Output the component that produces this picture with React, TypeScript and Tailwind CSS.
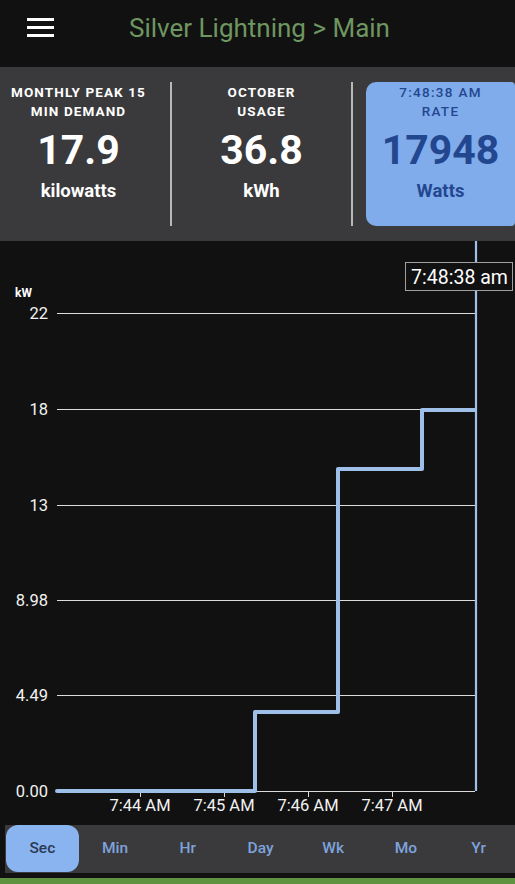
import React from 'react';

const gridLines = [
  { label: '22', y: 72 },
  { label: '18', y: 168 },
  { label: '13', y: 264 },
  { label: '8.98', y: 359 },
  { label: '4.49', y: 454 },
  { label: '0.00', y: 550 },
];

const xTicks = [
  { label: '7:44 AM', x: 140 },
  { label: '7:45 AM', x: 224 },
  { label: '7:46 AM', x: 308 },
  { label: '7:47 AM', x: 392 },
];

const tabs = ['Sec', 'Min', 'Hr', 'Day', 'Wk', 'Mo', 'Yr'];

const StatLabel = ({ lines }: { lines: string[] }) => (
  <div className="text-[13.5px] font-bold tracking-[1.1px] leading-[19px] text-white text-center">
    {lines.map((l) => (
      <div key={l}>{l}</div>
    ))}
  </div>
);

const Chart = () => {
  // step line in chart-local coordinates (top of chart = page y 241)
  const step = '57,550 255,550 255,471 338,471 338,228 422,228 422,169 475,169';
  return (
    <svg width="515" height="584" viewBox="0 0 515 584" className="block">
      <text x="15" y="56" fill="#ffffff" fontSize="12" fontWeight="700" fontFamily="Roboto, sans-serif">
        kW
      </text>
      {gridLines.map((g) => (
        <g key={g.label}>
          <line x1="57" x2="475" y1={g.y + 0.5} y2={g.y + 0.5} stroke="#dcdcdc" strokeWidth="1" />
          <text
            x="48"
            y={g.y + 6}
            textAnchor="end"
            fill="#f2f2f2"
            fontSize="16.5"
            fontFamily="Roboto, sans-serif"
          >
            {g.label}
          </text>
        </g>
      ))}
      {xTicks.map((t) => (
        <g key={t.label}>
          <line x1={t.x + 0.5} x2={t.x + 0.5} y1="550" y2="556" stroke="#dcdcdc" strokeWidth="1" />
          <text
            x={t.x}
            y="570"
            textAnchor="middle"
            fill="#f2f2f2"
            fontSize="16.5"
            fontFamily="Roboto, sans-serif"
          >
            {t.label}
          </text>
        </g>
      ))}
      <polyline
        points={step}
        fill="none"
        stroke="#9dbfe8"
        strokeWidth="4"
        strokeLinejoin="round"
        strokeLinecap="round"
      />
      <line x1="476" x2="476" y1="0" y2="550" stroke="#9dbfe8" strokeWidth="2.2" />
      <rect x="405.5" y="21.5" width="107" height="28" fill="#111111" stroke="#a0a0a0" strokeWidth="1" />
      <text x="459.5" y="42.5" textAnchor="middle" fill="#ffffff" fontSize="19.5" fontFamily="Roboto, sans-serif">
        7:48:38 am
      </text>
    </svg>
  );
};

export default function App() {
  return (
    <div className="w-[515px] h-[884px] bg-[#111111] flex flex-col overflow-hidden" style={{ fontFamily: 'Roboto, "Noto Sans", sans-serif' }}>
      {/* Header */}
      <div className="h-[67px] flex items-center relative shrink-0">
        <div className="absolute left-[27px] top-[18px] flex flex-col gap-[5px]">
          <div className="w-[27px] h-[3px] bg-white" />
          <div className="w-[27px] h-[3px] bg-white" />
          <div className="w-[27px] h-[3px] bg-white" />
        </div>
        <div className="w-full text-center pl-[4px] -mt-[10px] text-[26px] text-[#6e9660]">Silver Lightning &gt; Main</div>
      </div>

      {/* Stats */}
      <div className="h-[174px] bg-[#3a3a3c] flex items-stretch py-[15px] shrink-0">
        <div className="w-[170px] pr-[13px] flex flex-col items-center pt-[1px]">
          <StatLabel lines={['MONTHLY PEAK 15', 'MIN DEMAND']} />
          <div className="text-[41px] font-bold text-white leading-[46px] mt-[6px]">17.9</div>
          <div className="text-[18.5px] font-bold text-white mt-[5px]">kilowatts</div>
        </div>
        <div className="w-[2px] bg-[#b8b8b8]" />
        <div className="w-[179px] flex flex-col items-center pt-[1px]">
          <StatLabel lines={['OCTOBER', 'USAGE']} />
          <div className="text-[41px] font-bold text-white leading-[46px] mt-[6px]">36.8</div>
          <div className="text-[18.5px] font-bold text-white mt-[5px]">kWh</div>
        </div>
        <div className="w-[2px] bg-[#b8b8b8]" />
        <div className="flex-1 ml-[13px] bg-[#80acec] rounded-[10px] rounded-r-[4px] flex flex-col items-center pt-[1px]">
          <div className="text-[13.5px] font-medium tracking-[1.3px] leading-[19px] text-[#23478f] text-center">
            <div>7:48:38 AM</div>
            <div>RATE</div>
          </div>
          <div className="text-[41px] font-bold text-[#23478f] leading-[46px] mt-[6px]">17948</div>
          <div className="text-[18.5px] font-bold text-[#23478f] mt-[5px]">Watts</div>
        </div>
      </div>

      {/* Chart */}
      <div className="h-[584px] shrink-0">
        <Chart />
      </div>

      {/* Tabs */}
      <div className="h-[48px] ml-[5px] bg-[#3a3a3c] flex shrink-0">
        {tabs.map((t, i) => (
          <div
            key={t}
            className={
              i === 0
                ? 'flex-1 ml-[1px] mb-[1px] rounded-[12px] bg-[#8ab4f0] text-[#2a3a55] flex items-center justify-center text-[15.5px] font-medium'
                : 'flex-1 flex items-center justify-center text-[15.5px] font-medium text-[#7ea3dc]'
            }
          >
            {t}
          </div>
        ))}
      </div>
      <div className="h-[5px] shrink-0" />
      <div className="flex-1 bg-[#5f9340]" />
    </div>
  );
}
